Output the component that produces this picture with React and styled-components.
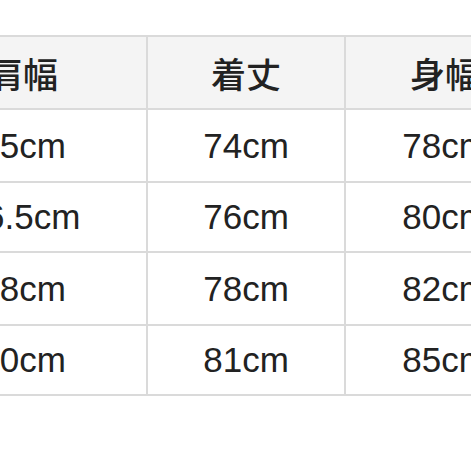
import React from 'react';
import styled, { createGlobalStyle } from 'styled-components';

const GlobalStyle = createGlobalStyle`
  body {
    margin: 0;
    background: #fff;
  }
`;

const Page = styled.div`
  width: 471px;
  height: 471px;
  overflow: hidden;
  padding-top: 35px;
  box-sizing: border-box;
`;

const SizeTable = styled.table`
  margin-left: -102px;
  border-collapse: collapse;
  table-layout: fixed;
  width: 640px;
  border: 2px solid #dadada;
`;

const HeadCell = styled.th`
  width: ${({ w }) => w}px;
  height: 71px;
  padding: 0;
  border: 2px solid #dadada;
  background: #f4f4f4;
  color: #222;
  font-family: "Noto Sans CJK JP", "Noto Sans CJK SC", sans-serif;
  font-weight: 500;
  font-size: 35px;
  text-align: center;
  vertical-align: middle;
`;

const Cell = styled.td`
  height: ${({ h }) => h}px;
  padding: 0;
  border: 2px solid #dadada;
  background: #fff;
  color: #222;
  font-family: "Liberation Sans", Arial, sans-serif;
  font-size: 35px;
  text-align: center;
  vertical-align: middle;
`;

const headers = [
  { label: '肩幅', w: 246 },
  { label: '着丈', w: 196 },
  { label: '身幅', w: 198 },
];

const rows = [
  { h: 71, values: ['45cm', '74cm', '78cm'] },
  { h: 68, values: ['46.5cm', '76cm', '80cm'] },
  { h: 71, values: ['48cm', '78cm', '82cm'] },
  { h: 68, values: ['50cm', '81cm', '85cm'] },
];

const App = () => {
  return (
    <Page>
      <GlobalStyle />
      <SizeTable>
        <thead>
          <tr>
            {headers.map((col) => (
              <HeadCell key={col.label} w={col.w}>{col.label}</HeadCell>
            ))}
          </tr>
        </thead>
        <tbody>
          {rows.map((row, i) => (
            <tr key={i}>
              {row.values.map((v, j) => (
                <Cell key={j} h={row.h}>{v}</Cell>
              ))}
            </tr>
          ))}
        </tbody>
      </SizeTable>
    </Page>
  );
};

export default App;
